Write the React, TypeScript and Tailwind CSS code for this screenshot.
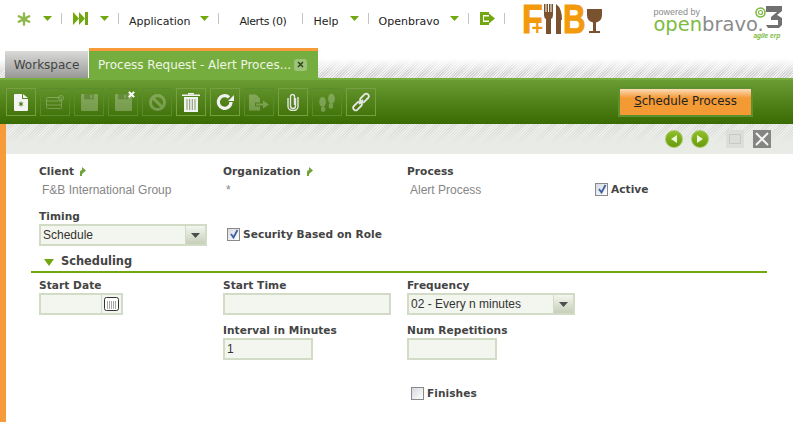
import { ReactNode } from "react";

function Caret({ className = "" }: { className?: string }) {
  return (
    <svg width="9" height="5" viewBox="0 0 9 5" className={`shrink-0 ${className}`}>
      <path d="M0 0h9L4.500 5z" fill="#72a80f" />
    </svg>
  );
}

function Sep() {
  return <div className="h-[11px] w-px shrink-0 bg-[#c4c4c4]" />;
}

function NavText({ children }: { children: ReactNode }) {
  return <span className="whitespace-nowrap text-[11px] leading-none text-[#222] font-['DejaVu_Sans',sans-serif]">{children}</span>;
}

function TopNav() {
  return (
    <div className="flex h-[48px] shrink-0 items-start">
      <div className="flex h-[37px] shrink-0 items-center pl-[17px]">
        <svg width="14" height="14" viewBox="0 0 14 14" className="shrink-0">
          <g stroke="#8fb84c" strokeWidth="2.400" strokeLinecap="round">
            <path d="M7 1.500V6M7 8v4.500M1.800 4.200 6 6.400M8 7.600l4.200 2.200M12.200 4.200 8 6.400M6 7.600 1.800 9.800" />
          </g>
        </svg>
        <Caret className="ml-[12px]" />
        <div className="ml-[9px]"><Sep /></div>
        <svg width="15" height="13" viewBox="0 0 15 13" className="ml-[11px] shrink-0">
          <path d="M0 0l6 6.500L0 13zM6 0l6 6.500L6 13z" fill="#72a80f" />
          <path d="M12 0h3v13h-3z" fill="#72a80f" />
        </svg>
        <Caret className="ml-[12px]" />
        <div className="ml-[9px]"><Sep /></div>
        <div className="ml-[10px]"><NavText>Application</NavText></div>
        <Caret className="ml-[10px]" />
        <div className="ml-[9px]"><Sep /></div>
        <div className="ml-[20px] w-[48px] tracking-[-0.4px]"><NavText>Alerts (0)</NavText></div>
        <div className="ml-[15px]"><Sep /></div>
        <div className="ml-[10px]"><NavText>Help</NavText></div>
        <Caret className="ml-[11px]" />
        <div className="ml-[9px]"><Sep /></div>
        <div className="ml-[10px]"><NavText>Openbravo</NavText></div>
        <Caret className="ml-[11px]" />
        <div className="ml-[9px]"><Sep /></div>
        <svg width="15" height="13" viewBox="0 0 15 13" className="ml-[11px] shrink-0">
          <path d="M0 0h9v3H3v7h6v3H0z" fill="#72a80f" />
          <path d="M4 4.500h5V1.500l6 5-6 5v-3H4z" fill="#72a80f" />
        </svg>
        <div className="ml-[9px]"><Sep /></div>
      </div>
      <FnbLogo />
      <OpenbravoLogo />
    </div>
  );
}

function FnbLogo() {
  return (
    <div className="relative ml-[17px] mt-[4px] h-[30px] w-[80px] shrink-0 text-[#f29a0b] font-['Liberation_Sans',sans-serif] font-bold">
      <span className="absolute left-0 top-0 origin-left scale-x-[0.85] text-[40px] leading-[30px] [-webkit-text-stroke:1px_#f29a0b]">F</span>
      <span className="absolute left-[9px] top-[14px] text-[20px] leading-[20px]">+</span>
      <svg width="18" height="30" viewBox="0 0 18 30" className="absolute left-[22px] top-0">
        <g fill="#7b5230">
          <path d="M0 0h1.500v8h1V0h1.500v8h1V0h1.500v8h1V0h1.500v11q0 3-2 4v15H2V15q-2-1-2-4z" />
          <path d="M12 0q6 4 6 16h-1v14h-5z" />
        </g>
      </svg>
      <span className="absolute left-[41px] top-0 origin-left scale-x-[0.78] text-[40px] leading-[30px] [-webkit-text-stroke:1px_#f29a0b]">B</span>
      <svg width="15" height="30" viewBox="0 0 15 30" className="absolute left-[65px] top-0">
        <path d="M0 5h15v6q0 6-6 7.500V27h4v2H2v-2h4v-8.500Q0 17 0 11z" fill="#7b5230" />
      </svg>
    </div>
  );
}

function OpenbravoLogo() {
  return (
    <div className="relative ml-[51px] mt-[6px] h-[32px] w-[131px] shrink-0 font-['Liberation_Sans',sans-serif]">
      <span className="absolute left-0 top-[2px] whitespace-nowrap text-[9px] leading-none text-[#8a8a8a]">powered by</span>
      <span className="absolute left-0 top-[9px] whitespace-nowrap text-[19.500px] leading-[20px] text-[#7dbb42] font-['DejaVu_Sans',sans-serif] font-normal">
        open<span className="text-[#8b8b8b]">bravo.</span>
      </span>
      <svg width="11" height="11" viewBox="0 0 11 11" className="absolute left-[102px] top-[1px]">
        <circle cx="5.500" cy="5.500" r="4.500" fill="none" stroke="#7dbb42" strokeWidth="1.500" />
        <circle cx="5.500" cy="5.500" r="2" fill="none" stroke="#7dbb42" strokeWidth="1.200" />
      </svg>
      <svg width="18" height="24" viewBox="0 0 18 24" className="absolute left-[112px] top-[-1px]">
        <path d="M1 1h16v5l-5 4 5 3v7l-3 3H3l-2-3h12v-5H6v-3l6-5H1z" fill="#707070" />
      </svg>
      <span className="absolute left-[100px] top-[27px] whitespace-nowrap text-[6.500px] font-bold italic leading-none text-[#7dbb42]">agile erp</span>
    </div>
  );
}

function Tabs() {
  return (
    <div className="flex h-[30px] shrink-0 items-end bg-[linear-gradient(#ffffff_35%,#ffffff00_85%),repeating-linear-gradient(135deg,#d4d4d4_0px,#d4d4d4_1px,#f0f0f0_1px,#f0f0f0_2px)] pl-[5px]">
      <div className="flex h-[27px] w-[84px] items-center justify-center border-r border-r-white bg-[linear-gradient(#dadad8,#989896)] text-[12px] text-[#444] font-['DejaVu_Sans',sans-serif]">
        Workspace
      </div>
      <div className="flex h-[30px] w-[229px] items-center border-t-[3px] border-t-[#f79a3a] bg-[#76ad3f] pl-[9px] text-[12px] text-[#f0f6e4] font-['DejaVu_Sans',sans-serif]">
        <span className="whitespace-nowrap">Process Request - Alert Proces...</span>
        <span className="ml-[3px] flex h-[12px] w-[13px] items-center justify-center rounded-[3px] bg-[#9cc377]">
          <svg width="7" height="7" viewBox="0 0 7 7">
            <path d="M1 1l5 5M6 1L1 6" stroke="#2b3b18" strokeWidth="1.300" />
          </svg>
        </span>
      </div>
    </div>
  );
}

function ToolBtn({ children, on, badge }: { children: ReactNode; on?: boolean; badge?: boolean }) {
  return (
    <div
      className={`relative flex h-[28px] w-[30px] items-center justify-center border ${
        on ? "border-[#74a042]" : "border-[#588c2c]"
      }`}
    >
      <div className={on ? "flex" : "flex opacity-25"}>{children}</div>
      {badge && (
        <svg width="7" height="7" viewBox="0 0 8 8" className="absolute right-[2px] top-[2px]">
          <path d="M1 1l6 6M7 1L1 7" stroke="#fff" strokeWidth="2.400" />
        </svg>
      )}
    </div>
  );
}

const floppy = (
  <svg width="17" height="17" viewBox="0 0 16 16">
    <path d="M1 0h14a1 1 0 0 1 1 1v14a1 1 0 0 1-1 1H1a1 1 0 0 1-1-1V1a1 1 0 0 1 1-1z" fill="#fff" />
    <path d="M3 0h9v5H3z" fill="#000" fillOpacity=".45" />
    <path d="M8.500 1h2v3h-2z" fill="#fff" />
  </svg>
);

function Toolbar() {
  return (
    <div className="flex h-[46px] shrink-0 items-center justify-between border-t-2 border-t-[#76ad3f] bg-[linear-gradient(#6a9c33,#3a6a02)] pl-[6px] pr-[40px]">
      <div className="flex gap-[4px]">
        <ToolBtn on>
          <svg width="14" height="17" viewBox="0 0 14 17">
            <path d="M1 0h7v5h6v11a1 1 0 0 1-1 1H1a1 1 0 0 1-1-1V1a1 1 0 0 1 1-1z" fill="#f4f4f4" />
            <path d="M9 0l5 4H9z" fill="#f4f4f4" />
            <path d="M7 7.500v5M4.800 8.700l4.400 2.600M9.200 8.700l-4.400 2.600" stroke="#3f7d10" strokeWidth="1" />
          </svg>
        </ToolBtn>
        <ToolBtn>
          <svg width="18" height="14" viewBox="0 0 18 14" fill="none" stroke="#fff" strokeWidth="1">
            <rect x=".5" y="2.500" width="15" height="11" rx="1" />
            <path d="M.5 6h15M.5 10h15" />
            <circle cx="15" cy="3" r="2.500" />
          </svg>
        </ToolBtn>
        <ToolBtn>{floppy}</ToolBtn>
        <ToolBtn badge>{floppy}</ToolBtn>
        <ToolBtn>
          <svg width="17" height="17" viewBox="0 0 17 17" fill="none" stroke="#fff" strokeWidth="3">
            <circle cx="8.500" cy="8.500" r="7" />
            <path d="M3.500 3.500l10 10" />
          </svg>
        </ToolBtn>
        <ToolBtn on>
          <svg width="18" height="19" viewBox="0 0 18 19">
            <path d="M0 1.500h18V3H0z" fill="#f2f2f2" />
            <path d="M6 0h6v1.500H6z" fill="#f2f2f2" />
            <path d="M2 4h14v15H2z" fill="#f2f2f2" />
            <path d="M5 6v11M7.700 6v11M10.300 6v11M13 6v11" stroke="#7c9a62" strokeWidth="1" />
          </svg>
        </ToolBtn>
        <ToolBtn on>
          <svg width="18" height="16" viewBox="0 0 18 16" fill="none">
            <path d="M15 8a6.300 6.300 0 1 1-2-4.600" stroke="#f2f2f2" strokeWidth="3.200" />
            <path d="M18 1v6h-6z" fill="#f2f2f2" />
          </svg>
        </ToolBtn>
        <ToolBtn>
          <svg width="20" height="17" viewBox="0 0 20 16">
            <path d="M0 0h7l4 4v4H6v4h5v4H0z" fill="#fff" />
            <path d="M7 9h7V6l6 4-6 4v-3H7z" fill="#fff" />
          </svg>
        </ToolBtn>
        <ToolBtn on>
          <svg width="12" height="18" viewBox="0 0 12 18" fill="none" stroke="#e6e6e6" strokeWidth="1.400">
            <path d="M8.500 5v8a2.500 2.500 0 0 1-5 0V3.500a2 2 0 0 1 4 0V12" />
            <path d="M1 5v8.500a5 4 0 0 0 10 0V4" />
          </svg>
        </ToolBtn>
        <ToolBtn>
          <svg width="18" height="20" viewBox="0 0 16 18" fill="#fff">
            <ellipse cx="4" cy="9" rx="3" ry="4.500" />
            <ellipse cx="4.500" cy="15.500" rx="2" ry="2.500" />
            <ellipse cx="12" cy="6" rx="3" ry="4.500" />
            <ellipse cx="11.500" cy="12.500" rx="2" ry="2.500" />
          </svg>
        </ToolBtn>
        <ToolBtn on>
          <svg width="20" height="20" viewBox="0 0 20 20" fill="none" stroke="#e6e6e6" strokeWidth="1.800">
            <rect x="11" y="1" width="5" height="10" rx="2.500" transform="rotate(45 13.500 6)" />
            <rect x="4" y="9" width="5" height="10" rx="2.500" transform="rotate(45 6.500 14)" />
            <path d="M8 12l4-4" />
          </svg>
        </ToolBtn>
      </div>
      <div className="border-[2px] border-[#5d9130]">
        <div className="flex h-[26px] w-[131px] items-center justify-center bg-[linear-gradient(#fddcb9_0px,#f49a35_9px,#f49a35_100%)] text-[11.800px] text-[#222] font-['DejaVu_Sans',sans-serif]">
          <span className="underline">S</span>chedule Process
        </div>
      </div>
    </div>
  );
}

function RoundBtn({ dir }: { dir: "left" | "right" }) {
  return (
    <div className="flex h-[18px] w-[18px] items-center justify-center rounded-full border border-[#a8c96a] bg-[linear-gradient(#8fc02a,#679a0a)]">
      <svg width="6" height="8" viewBox="0 0 6 8">
        <path d={dir === "left" ? "M6 0v8L0 4z" : "M0 0v8l6-4z"} fill="#eef6da" />
      </svg>
    </div>
  );
}

function NavBand() {
  return (
    <div className="flex h-[30px] items-center justify-end bg-[linear-gradient(#e9ebe700,#e9ebe7_70%),repeating-linear-gradient(135deg,#d9dbd7_0px,#d9dbd7_1px,#f0f1ee_1px,#f0f1ee_2px)] pr-[22px]">
      <RoundBtn dir="left" />
      <div className="ml-[8px]"><RoundBtn dir="right" /></div>
      <div className="ml-[17px] flex h-[18px] w-[18px] items-center justify-center bg-[#dcdedb]">
        <div className="h-[10px] w-[12px] border border-[#c8cac6]" />
      </div>
      <div className="ml-[9px] flex h-[18px] w-[18px] items-center justify-center bg-[#858684]">
        <svg width="14" height="14" viewBox="0 0 14 14"><path d="M1 1l12 12M13 1L1 13" stroke="#f4f4f4" strokeWidth="2" /></svg>
      </div>
    </div>
  );
}

function Label({ children, link }: { children: ReactNode; link?: boolean }) {
  return (
    <div className="flex h-[14px] items-center gap-[5px] whitespace-nowrap text-[10.600px] font-bold leading-none tracking-[0.05px] text-[#444] font-['DejaVu_Sans',sans-serif]">
      {children}
      {link && (
        <svg width="7" height="9" viewBox="0 0 7 9">
          <path d="M1 9V5q0-2 2-2V0l4 3.500L3 7V5.500Q3 7 3 9z" fill="#6fa33a" />
        </svg>
      )}
    </div>
  );
}

function Value({ children }: { children: ReactNode }) {
  return <div className="mt-[5px] pl-[3px] text-[12px] leading-[14px] text-[#868686] font-['Liberation_Sans',sans-serif]">{children}</div>;
}

const fieldBox = "h-[22px] border-2 border-[#d2dbc6] bg-[#f3f6ef] text-[12px] text-[#333] font-['Liberation_Sans',sans-serif]";

function Select({ value }: { value: string }) {
  return (
    <div className={`flex w-[168px] items-center justify-between pl-[2px] ${fieldBox}`}>
      <span className="whitespace-nowrap">{value}</span>
      <div className="flex h-full w-[20px] items-center justify-center border-l border-l-[#d2dbc6] bg-[linear-gradient(#f3f6ef,#c6cfb8)]">
        <svg width="9" height="5" viewBox="0 0 9 5"><path d="M0 0h9L4.500 5z" fill="#4d4d4d" /></svg>
      </div>
    </div>
  );
}

function Check({ checked }: { checked?: boolean }) {
  return (
    <div className="flex h-[13px] w-[13px] shrink-0 items-center justify-center border border-[#8a8a8a] bg-[linear-gradient(135deg,#d6d9e0,#ffffff)]">
      {checked && (
        <svg width="10" height="10" viewBox="0 0 10 10">
          <path d="M2 5l2.500 3.500L8.500 1" fill="none" stroke="#3c5fa8" strokeWidth="1.800" />
        </svg>
      )}
    </div>
  );
}

function CheckField({ label, checked }: { label: string; checked?: boolean }) {
  return (
    <div className="flex items-center gap-[3px]">
      <Check checked={checked} />
      <Label>{label}</Label>
    </div>
  );
}

function Form() {
  return (
    <div className="flex-1 border-l-[6px] border-l-[#f79a3a] bg-white">
      <NavBand />
      <div className="pl-[33px] pr-[26px] pt-[10px]">
        <div className="grid grid-cols-[184px_184px_188px_1fr]">
          <div>
            <Label link>Client</Label>
            <Value>F&amp;B International Group</Value>
          </div>
          <div>
            <Label link>Organization</Label>
            <Value>*</Value>
          </div>
          <div>
            <Label>Process</Label>
            <Value>Alert Process</Value>
          </div>
          <div className="pt-[18px]">
            <CheckField label="Active" checked />
          </div>
        </div>
        <div className="mt-[12px] grid grid-cols-[188px_1fr]">
          <div>
            <Label>Timing</Label>
            <div className="mt-[1px]"><Select value="Schedule" /></div>
          </div>
          <div className="pt-[18px]">
            <CheckField label="Security Based on Role" checked />
          </div>
        </div>
        <div className="-ml-[8px] mt-[7px] flex h-[20px] items-center gap-[7px] border-b-2 border-b-[#72a80f] pl-[13px]">
          <svg width="10" height="7" viewBox="0 0 10 7"><path d="M0 0h10L5 7z" fill="#72a80f" /></svg>
          <span className="text-[11.400px] font-bold text-[#444] font-['DejaVu_Sans',sans-serif]">Scheduling</span>
        </div>
        <div className="mt-[5px] grid grid-cols-[184px_184px_1fr]">
          <div>
            <Label>Start Date</Label>
            <div className={`mt-[1px] flex w-[84px] justify-end ${fieldBox}`}>
              <div className="flex h-full w-[20px] items-center justify-center border-l border-l-[#d2dbc6]">
                <svg width="15" height="14" viewBox="0 0 15 14">
                  <rect x=".5" y=".5" width="14" height="13" rx="2" fill="#fff" stroke="#333" />
                  <path d="M3 5h9M3 7h9M3 9h9M3 11h9" stroke="#555" strokeWidth="1" strokeDasharray="1 1" />
                </svg>
              </div>
            </div>
          </div>
          <div>
            <Label>Start Time</Label>
            <div className={`mt-[1px] w-[168px] ${fieldBox}`} />
          </div>
          <div>
            <Label>Frequency</Label>
            <div className="mt-[1px]"><Select value="02 - Every n minutes" /></div>
          </div>
          <div />
          <div className="mt-[8px]">
            <Label>Interval in Minutes</Label>
            <div className={`mt-[1px] flex w-[90px] items-center pl-[2px] ${fieldBox}`}>1</div>
          </div>
          <div className="mt-[8px]">
            <Label>Num Repetitions</Label>
            <div className={`mt-[1px] w-[90px] ${fieldBox}`} />
          </div>
          <div />
          <div />
          <div className="mt-[26px] pl-[4px]">
            <CheckField label="Finishes" />
          </div>
        </div>
      </div>
    </div>
  );
}

export default function App() {
  return (
    <div className="flex h-[422px] w-[793px] flex-col overflow-hidden bg-white">
      <TopNav />
      <Tabs />
      <Toolbar />
      <Form />
    </div>
  );
}
